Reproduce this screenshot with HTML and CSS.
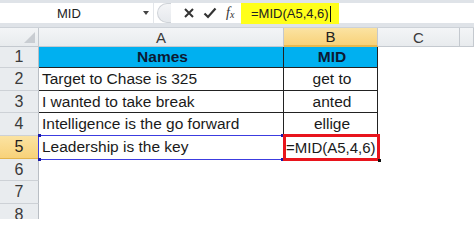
FILE: index.html
```
<!DOCTYPE html>
<html>
<head>
<meta charset="utf-8">
<link rel="stylesheet" href="styles.css">
</head>
<body>
<div class="app">
  <div class="fbar">
    <div class="fbar-row">
      <div class="namebox">
        <span class="name">MID</span>
        <span class="drop"></span>
      </div>
      <div class="grip"></div>
      <div class="tools">
        <svg class="ico" width="12" height="12" viewBox="0 0 12 12"><path d="M2 2 L10 10 M10 2 L2 10" stroke="#333" stroke-width="2" fill="none"/></svg>
        <svg class="ico" width="14" height="12" viewBox="0 0 14 12"><path d="M1.5 6.5 L5 10 L12.5 1.5" stroke="#333" stroke-width="2.2" fill="none"/></svg>
        <span class="fx"><i>f</i><sub>x</sub></span>
      </div>
      <div class="formula">=MID(A5,4,6)<span class="caret"></span></div>
    </div>
  </div>
  <div class="sheet">
    <div class="hd corner"><span class="tri"></span></div>
    <div class="hd col">A</div>
    <div class="hd col sel">B</div>
    <div class="hd col">C</div>
    <div class="hd col last"></div>

    <div class="hd row">1</div>
    <div class="c a head">Names</div>
    <div class="c b head">MID</div>
    <div class="c"></div><div class="c"></div>

    <div class="hd row">2</div>
    <div class="c a tb">Target to Chase is 325</div>
    <div class="c b tb ctr">get to</div>
    <div class="c"></div><div class="c"></div>

    <div class="hd row">3</div>
    <div class="c a tb">I wanted to take break</div>
    <div class="c b tb ctr">anted</div>
    <div class="c"></div><div class="c"></div>

    <div class="hd row">4</div>
    <div class="c a tb">Intelligence is the go forward</div>
    <div class="c b tb ctr">ellige</div>
    <div class="c"></div><div class="c"></div>

    <div class="hd row sel">5</div>
    <div class="c a ref">Leadership is the key<span class="refbox"><i class="q tl"></i><i class="q tr"></i><i class="q bl"></i><i class="q br"></i></span></div>
    <div class="c b active">=MID(A5,4,6)<span class="redbox"></span><span class="handle"></span></div>
    <div class="c"></div><div class="c"></div>

    <div class="hd row">6</div>
    <div class="c"></div><div class="c"></div><div class="c"></div><div class="c"></div>
    <div class="hd row">7</div>
    <div class="c"></div><div class="c"></div><div class="c"></div><div class="c"></div>
    <div class="hd row">8</div>
    <div class="c"></div><div class="c"></div><div class="c"></div><div class="c"></div>
  </div>
</div>
</body>
</html>
```
FILE: styles.css
```
html, body {
  margin: 0;
  padding: 0;
  background: #fff;
}
body {
  width: 474px;
  height: 219px;
  overflow: hidden;
  font-family: "Liberation Sans", Arial, sans-serif;
  color: #1a1a1a;
}
.app {
  display: flex;
  flex-direction: column;
}
.fbar {
  background: #dfe3e8;
  padding: 3px 0 4px 0;
  border-bottom: 1px solid #cdd2d8;
}
.fbar-row {
  height: 20px;
  background: #fff;
  display: flex;
  align-items: center;
}
.namebox {
  width: 153px;
  height: 20px;
  display: flex;
  align-items: center;
  position: relative;
  border-right: 1px solid #e3e6ea;
}
.name {
  font-size: 13px;
  margin-left: 57px;
  color: #222;
}
.drop {
  position: absolute;
  left: 143px;
  top: 8px;
  width: 0;
  height: 0;
  border-left: 3px solid transparent;
  border-right: 3px solid transparent;
  border-top: 4px solid #444;
}
.grip {
  width: 14px;
  height: 20px;
  margin-left: 3px;
  border-radius: 10px 0 0 10px;
  border: 1px solid #cfd3d8;
  border-right: none;
  box-sizing: border-box;
  background: linear-gradient(#f4f5f7, #e6e9ed);
}
.tools {
  display: flex;
  align-items: center;
  gap: 8px;
  margin-left: 12px;
  width: 58px;
}
.fx {
  font-family: "Liberation Serif", serif;
  font-size: 14px;
  color: #333;
  margin-left: 1px;
}
.fx i { font-style: italic; }
.fx sub {
  font-size: 10px;
  font-style: italic;
  vertical-align: -1px;
}
.formula {
  height: 21px;
  margin-top: 1px;
  width: 98px;
  box-sizing: border-box;
  padding-left: 10px;
  background: #ffff1a;
  font-size: 13px;
  line-height: 21px;
  color: #222;
  display: flex;
  align-items: center;
}
.caret {
  display: inline-block;
  width: 1px;
  height: 16px;
  background: #111;
  margin-left: 1px;
}
.sheet {
  display: grid;
  grid-template-columns: 39px 245px 94px 82px 1fr;
  grid-template-rows: 19px 21px repeat(7, 22.7px);
}
.hd {
  background: linear-gradient(#f3f5f7, #e8ebee);
  border-right: 1px solid #c4c9cf;
  border-bottom: 1px solid #c4c9cf;
  box-sizing: border-box;
  display: flex;
  align-items: center;
  justify-content: center;
  color: #3a3a3a;
}
.col {
  font-size: 15px;
}
.row {
  font-size: 16px;
  background: #e9ecef;
  border-bottom: 1px solid #cdd1d6;
  border-right: 1px solid #b9bec4;
}
.hd.sel {
  background: linear-gradient(#fbe3a2, #f8d27a);
  border-bottom-color: #e3b44c;
  color: #222;
}
.hd.col.sel {
  border-bottom: 2px solid #e8b84f;
}
.corner {
  position: relative;
}
.tri {
  position: absolute;
  right: 3px;
  bottom: 3px;
  width: 0;
  height: 0;
  border-left: 11px solid transparent;
  border-bottom: 11px solid #c9cdd2;
}
.c {
  box-sizing: border-box;
  font-size: 15.5px;
  display: flex;
  align-items: center;
  white-space: nowrap;
  position: relative;
  background: #fff;
}
.a, .b {
  padding-left: 3px;
}
.head {
  background: #00b0f0;
  font-weight: bold;
  justify-content: center;
  color: #0c1a33;
  border-bottom: 1px solid #222;
  border-right: 1px solid #222;
}
.tb {
  border-bottom: 1px solid #222;
  border-right: 1px solid #222;
}
.ctr {
  justify-content: center;
}
.ref {
  z-index: 2;
}
.active {
  padding-left: 2px;
  z-index: 3;
  background: transparent;
  font-size: 15px;
}
.refbox {
  position: absolute;
  left: -1px;
  top: -1px;
  right: 0;
  bottom: -1px;
  border: 1px solid #3c3ce0;
}
.q {
  position: absolute;
  width: 3px;
  height: 3px;
  background: #1a1aa8;
}
.q.tl { left: -1px; top: -2px; }
.q.tr { right: -1px; top: -2px; }
.q.bl { left: -1px; bottom: -2px; }
.q.br { right: -1px; bottom: -2px; }
.redbox {
  position: absolute;
  left: -1px;
  top: -2px;
  right: -2px;
  bottom: -2px;
  border: 3px solid #e8141c;
}
.handle {
  position: absolute;
  right: -3px;
  bottom: -3px;
  width: 3px;
  height: 3px;
  background: #111;
}
```
